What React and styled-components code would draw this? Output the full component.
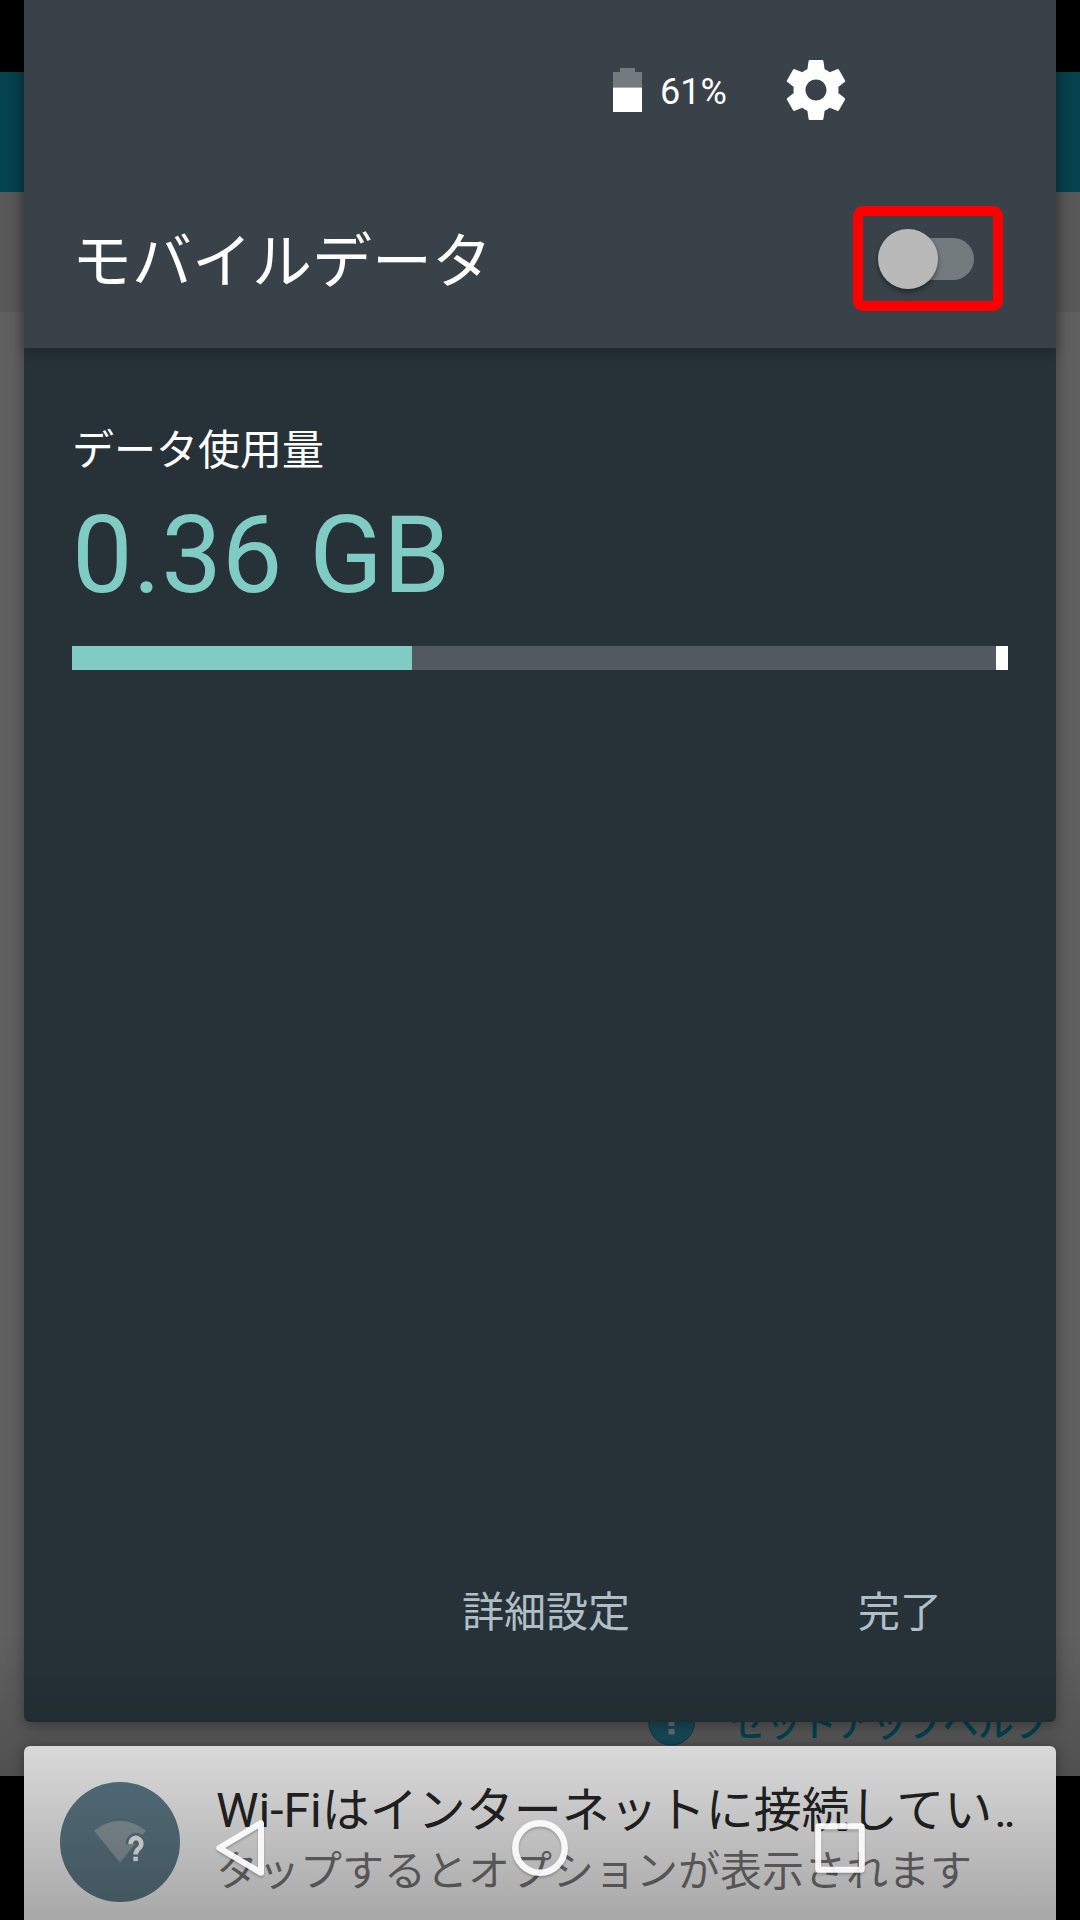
import React from 'react';
import styled, { createGlobalStyle } from 'styled-components';

const GlobalStyle = createGlobalStyle`
  *, *::before, *::after { box-sizing: border-box; }
  body {
    margin: 0;
    background: #000;
    font-family: Roboto, "Noto Sans CJK JP", sans-serif;
  }
  svg { display: block; flex: none; }
`;

const Screen = styled.div`
  display: grid;
  width: 1080px;
  height: 1920px;
  overflow: hidden;
  background: #000;
  > * { grid-area: 1 / 1; min-width: 0; min-height: 0; }
`;

/* dimmed app behind the shade */
const AppLayer = styled.div`
  display: flex;
  flex-direction: column;
  padding-top: 72px;
`;
const AppBar = styled.div`
  height: 120px;
  background: #07434f;
`;
const AppSubBar = styled.div`
  height: 120px;
  background: #595959;
`;
const AppBody = styled.div`
  display: flex;
  align-items: flex-end;
  justify-content: flex-end;
  height: 1464px;
  padding: 0 24px 29px 0;
  background: #606060;
`;
const HelpLink = styled.div`
  display: flex;
  align-items: center;
  gap: 34px;
  height: 48px;
  color: #004a5a;
  font-size: 36px;
  line-height: 48px;
  white-space: nowrap;
`;
const HelpLabel = styled.span`
  width: 326px;
  padding-top: 4px;
  letter-spacing: -0.6px;
  font-weight: 500;
`;

/* notification shade */
const Shade = styled.div`
  display: flex;
  flex-direction: column;
  gap: 24px;
  padding: 0 24px;
`;
const Panel = styled.section`
  display: flex;
  flex-direction: column;
  height: 1722px;
  border-radius: 0 0 6px 6px;
  background: #263238;
  box-shadow: 0 4px 16px rgba(0, 0, 0, 0.36);
`;
const Header = styled.header`
  height: 348px;
  background: #3a4249;
  box-shadow: 0 5px 14px rgba(0, 0, 0, 0.24);
`;
const StatusRow = styled.div`
  display: flex;
  align-items: center;
  height: 172px;
  padding: 8px 0 0 589px;
`;
const BatteryLevel = styled.span`
  width: 120px;
  margin-left: 18px;
  padding-top: 4px;
  color: #fff;
  font-size: 36px;
  line-height: 42px;
`;
const TitleRow = styled.div`
  display: flex;
  align-items: center;
  justify-content: space-between;
  height: 176px;
  padding: 0 53px 0 48px;
`;
const Title = styled.h1`
  margin: 0;
  padding-top: 6px;
  color: #fff;
  font-size: 60px;
  font-weight: 400;
  line-height: 72px;
`;
const Highlight = styled.div`
  display: flex;
  align-items: center;
  width: 150px;
  height: 105px;
  margin-top: -3px;
  padding: 1px 0 0 28px;
  border: 10px solid #f00;
  border-radius: 10px;
`;
const Toggle = styled.div`
  display: flex;
  align-items: center;
  width: 83px;
  height: 42px;
  border-radius: 21px;
  background: #737b7e;
`;
const Thumb = styled.div`
  flex: none;
  width: 60px;
  height: 60px;
  margin-left: -12.8px;
  border-radius: 50%;
  background: #b9b9b9;
  box-shadow: 0 3px 5px rgba(0, 0, 0, 0.4);
`;
const Content = styled.div`
  display: flex;
  flex: 1;
  flex-direction: column;
  padding: 74px 48px 77px;
`;
const UsageLabel = styled.div`
  color: #fff;
  font-size: 42px;
  line-height: 58px;
`;
const UsageValue = styled.div`
  margin-top: 11px;
  color: #80cbc4;
  font-size: 108px;
  line-height: 128px;
`;
const UsageBar = styled.div`
  display: flex;
  justify-content: space-between;
  height: 24px;
  margin-top: 27px;
  background: #525a61;
`;
const Segment = styled.div`
  width: ${(p) => p.$width}px;
  background: ${(p) => p.$color};
`;
const Actions = styled.div`
  display: flex;
  justify-content: flex-end;
  gap: 228px;
  margin-top: auto;
  padding-right: 66px;
`;
const Action = styled.button`
  padding: 0;
  border: 0;
  background: none;
  color: #b0bec5;
  font: inherit;
  font-size: 42px;
  line-height: 64px;
`;

const Notification = styled.section`
  display: flex;
  height: 174px;
  padding: 36px 0 0 36px;
  border-radius: 6px 6px 0 0;
  background: #fafafa;
  box-shadow: 0 2px 14px rgba(0, 0, 0, 0.4);
`;
const NotificationText = styled.div`
  display: flex;
  flex-direction: column;
  padding-left: 36px;
  white-space: nowrap;
`;
const NotificationTitle = styled.div`
  color: rgba(0, 0, 0, 0.87);
  font-size: 48px;
  line-height: 58px;
`;
const Leader = styled.span`
  margin-left: 2px;
  letter-spacing: -3.5px;
`;
const NotificationBody = styled.div`
  margin-top: 1px;
  color: rgba(0, 0, 0, 0.54);
  font-size: 42px;
  line-height: 62px;
`;

/* system navigation */
const NavLayer = styled.nav`
  z-index: 1;
  display: flex;
  align-items: flex-end;
  justify-content: center;
  align-self: end;
  gap: 212px;
  height: 288px;
  padding-bottom: 40px;
  background: linear-gradient(rgba(0, 0, 0, 0), rgba(0, 0, 0, 0.33));
  svg { filter: drop-shadow(0 2px 1px rgba(0, 0, 0, 0.22)); }
`;

const InfoIcon = () => (
  <svg width="48" height="48" viewBox="0 0 48 48">
    <circle cx="23.500" cy="23.300" r="22.800" fill="#1a5162" stroke="#0c4150" />
    <path d="M20.500 10h6v17h-6zM20.500 30h6v5.500h-6z" fill="#717c80" />
  </svg>
);

const BatteryIcon = () => (
  <svg width="29" height="44" viewBox="0 0 29 44">
    <path d="M7 0h15v4h7v15.500H0V4h7z" fill="#737b7e" />
    <path d="M0 19.500h29v24.500H0z" fill="#fff" />
  </svg>
);

const GearIcon = () => (
  <svg width="72" height="72" viewBox="0 0 24 24">
    <path
      fill="#fff"
      d="M19.43 12.98c.04-.32.07-.64.07-.98s-.03-.66-.07-.98l2.11-1.65c.19-.15.24-.42.12-.64l-2-3.46c-.12-.22-.39-.3-.61-.22l-2.49 1c-.52-.4-1.08-.73-1.69-.98l-.38-2.65C14.46 2.18 14.25 2 14 2h-4c-.25 0-.46.18-.49.42l-.38 2.65c-.61.25-1.17.59-1.69.98l-2.49-1c-.23-.09-.49 0-.61.22l-2 3.46c-.13.22-.07.49.12.64l2.11 1.65c-.04.32-.07.65-.07.98s.03.66.07.98l-2.11 1.65c-.19.15-.24.42-.12.64l2 3.46c.12.22.39.3.61.22l2.49-1c.52.4 1.08.73 1.69.98l.38 2.65c.03.24.24.42.49.42h4c.25 0 .46-.18.49-.42l.38-2.65c.61-.25 1.17-.59 1.69-.98l2.49 1c.23.09.49 0 .61-.22l2-3.46c.12-.22.07-.49-.12-.64l-2.11-1.65zM12 15.5c-1.930 0-3.500-1.570-3.500-3.500s1.570-3.500 3.500-3.500 3.500 1.570 3.500 3.500-1.570 3.500-3.500 3.500z"
    />
  </svg>
);

const questionMark = 'M70.700 62a5.300 5.700 0 1 1 9.200 3.500c-2.200 2.300-4.300 3.500-4.300 7';

const WifiUnknownIcon = () => (
  <svg width="120" height="120" viewBox="0 0 120 120">
    <circle cx="60" cy="60" r="60" fill="#607d8b" />
    <path d="M34 48.700Q45.500 39 60 39T86 48.700L60 80.500Z" fill="#919fa6" />
    <path d={questionMark} fill="none" stroke="#607d8b" strokeWidth="10" />
    <path d={questionMark} fill="none" stroke="#fff" strokeWidth="4.600" />
    <path d="M73.300 74.700h4.600v4.400h-4.600z" fill="#fff" />
  </svg>
);

const BackIcon = () => (
  <svg width="88" height="64" viewBox="0 0 88 64">
    <path
      d="M23.300 32L65 7.200V56.800Z"
      fill="none"
      stroke="#fff"
      strokeOpacity=".92"
      strokeWidth="6"
      strokeLinejoin="round"
    />
  </svg>
);
const HomeIcon = () => (
  <svg width="88" height="64" viewBox="0 0 88 64">
    <circle cx="44" cy="32" r="24.700" fill="none" stroke="#fff" strokeOpacity=".92" strokeWidth="6.500" />
  </svg>
);
const RecentsIcon = () => (
  <svg width="88" height="64" viewBox="0 0 88 64">
    <rect
      x="22.200"
      y="10.200"
      width="43.600"
      height="43.600"
      rx="1"
      fill="none"
      stroke="#fff"
      strokeOpacity=".92"
      strokeWidth="6"
      strokeLinejoin="round"
    />
  </svg>
);

export default function App() {
  return (
    <>
      <GlobalStyle />
      <Screen>
        <AppLayer>
          <AppBar />
          <AppSubBar />
          <AppBody>
            <HelpLink>
              <InfoIcon />
              <HelpLabel>セットアップヘルプ</HelpLabel>
            </HelpLink>
          </AppBody>
        </AppLayer>

        <Shade>
          <Panel>
            <Header>
              <StatusRow>
                <BatteryIcon />
                <BatteryLevel>61%</BatteryLevel>
                <GearIcon />
              </StatusRow>
              <TitleRow>
                <Title>モバイルデータ</Title>
                <Highlight>
                  <Toggle role="switch" aria-checked="false">
                    <Thumb />
                  </Toggle>
                </Highlight>
              </TitleRow>
            </Header>
            <Content>
              <UsageLabel>データ使用量</UsageLabel>
              <UsageValue>0.36 GB</UsageValue>
              <UsageBar>
                <Segment $width={340} $color="#80cbc4" />
                <Segment $width={12} $color="#fff" />
              </UsageBar>
              <Actions>
                <Action>詳細設定</Action>
                <Action>完了</Action>
              </Actions>
            </Content>
          </Panel>

          <Notification>
            <WifiUnknownIcon />
            <NotificationText>
              <NotificationTitle>
                Wi-Fiはインターネットに接続してい<Leader>..</Leader>
              </NotificationTitle>
              <NotificationBody>タップするとオプションが表示されます</NotificationBody>
            </NotificationText>
          </Notification>
        </Shade>

        <NavLayer>
          <BackIcon />
          <HomeIcon />
          <RecentsIcon />
        </NavLayer>
      </Screen>
    </>
  );
}
